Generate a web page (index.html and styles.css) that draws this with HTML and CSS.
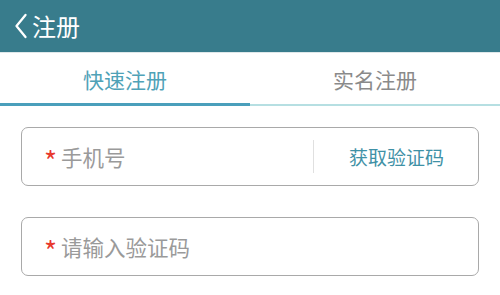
FILE: index.html
```html
<!DOCTYPE html>
<html lang="zh-CN">
<head>
<meta charset="utf-8">
<title>注册</title>
<link rel="stylesheet" href="styles.css">
</head>
<body>
<header class="topbar">
  <svg class="back" width="14" height="26" viewBox="0 0 14 26"><polyline points="11.5,2 2.5,13 11.5,24" fill="none" stroke="#fff" stroke-width="2.3" stroke-linecap="round" stroke-linejoin="round"/></svg>
  <span class="title">注册</span>
</header>
<nav class="tabs">
  <div class="tab active">快速注册</div>
  <div class="tab">实名注册</div>
</nav>
<main class="form">
  <div class="field">
    <span class="req">*</span>
    <span class="placeholder">手机号</span>
    <span class="divider"></span>
    <span class="code-btn">获取验证码</span>
  </div>
  <div class="field">
    <span class="req">*</span>
    <span class="placeholder">请输入验证码</span>
  </div>
</main>
</body>
</html>
```
FILE: styles.css
```css
* { box-sizing: border-box; }
body {
  margin: 0;
  background: #fff;
  font-family: "Noto Sans CJK SC", "Noto Sans", sans-serif;
}
.topbar {
  height: 53px;
  background: #387c8c;
  display: flex;
  align-items: center;
  padding-left: 14px;
  border-bottom: 1px solid #dfe8ea;
}
.back { display: block; margin-right: 4px; }
.title {
  color: #fff;
  font-size: 24px;
  line-height: 1;
}
.tabs {
  display: flex;
  height: 53px;
}
.tab {
  flex: 1;
  display: flex;
  align-items: center;
  justify-content: center;
  font-size: 21px;
  color: #8a8a8a;
  border-bottom: 2px solid #b6dfe2;
  padding-top: 1px;
}
.tab.active {
  color: #4fa2b7;
  border-bottom: 3px solid #4a9fbb;
}
.form {
  padding: 21px 21px 0;
  display: flex;
  flex-direction: column;
  gap: 31px;
}
.field {
  height: 59px;
  border: 1.5px solid #a9a9a9;
  border-radius: 7px;
  display: flex;
  align-items: center;
  padding-left: 22px;
  padding-right: 34px;
}
.req {
  color: #e8392e;
  font-size: 28px;
  line-height: 1;
  margin-right: 4px;
  position: relative;
  top: 3px;
}
.placeholder {
  color: #9a9a9a;
  font-size: 21.5px;
  flex: 1;
}
.divider {
  width: 1px;
  height: 33px;
  background: #e0e0e0;
  margin-right: 35px;
}
.code-btn {
  color: #3f91a6;
  font-size: 19px;
}
```
